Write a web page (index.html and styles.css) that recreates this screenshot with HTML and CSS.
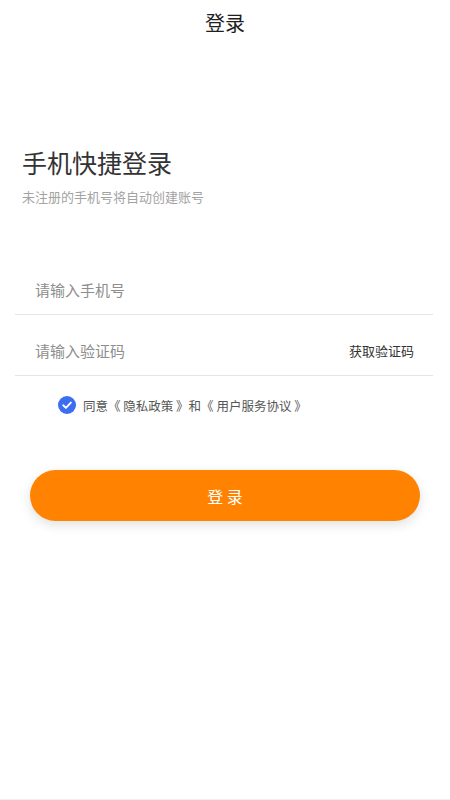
FILE: index.html
```html
<!DOCTYPE html>
<html lang="zh-CN">
<head>
<meta charset="utf-8">
<title>登录</title>
<link rel="stylesheet" href="styles.css">
</head>
<body>
<div class="page">
  <header class="topbar">登录</header>
  <section class="intro">
    <h1 class="heading">手机快捷登录</h1>
    <p class="sub">未注册的手机号将自动创建账号</p>
  </section>
  <form class="form">
    <div class="row">
      <span class="ph">请输入手机号</span>
    </div>
    <div class="row">
      <span class="ph">请输入验证码</span>
      <span class="code">获取验证码</span>
    </div>
  </form>
  <div class="agree">
    <span class="check">
      <svg width="18" height="18" viewBox="0 0 18 18"><circle cx="9" cy="9" r="9" fill="#3b6ef0"/><path d="M5.2 9.3 L7.9 11.9 L12.9 6.6" fill="none" stroke="#fff" stroke-width="1.9" stroke-linecap="round" stroke-linejoin="round"/></svg>
    </span>
    <span class="agree-text">同意《 隐私政策 》和《 用户服务协议 》</span>
  </div>
  <div class="btn-wrap">
    <button class="btn" type="button">登 录</button>
  </div>
</div>
</body>
</html>
```

FILE: styles.css
```css
* { box-sizing: border-box; }
html, body { margin: 0; padding: 0; background: #fff; }
body {
  font-family: "Noto Sans CJK SC", "Noto Sans", sans-serif;
  color: #333;
}
.page {
  height: 800px;
  border-bottom: 1px solid #f0f0f0;
  display: flex;
  flex-direction: column;
}
.topbar {
  height: 46px;
  line-height: 46px;
  text-align: center;
  font-size: 20px;
  color: #1f1f1f;
}
.intro {
  padding: 101px 0 0 22px;
}
.heading {
  margin: 0;
  font-size: 25px;
  font-weight: 400;
  line-height: 30px;
  color: #333;
}
.sub {
  margin: 10px 0 0;
  font-size: 13px;
  line-height: 20px;
  color: #a3a3a3;
}
.form {
  margin: 47px 17px 0 15px;
}
.row {
  margin-top: 11px;
  height: 50px;
  border-bottom: 1px solid #e6e6e6;
  display: flex;
  align-items: center;
  justify-content: space-between;
  padding: 0 19px 0 20px;
}
.ph {
  font-size: 15px;
  color: #8e8e8e;
}
.code {
  font-size: 13px;
  color: #333;
}
.agree {
  margin: 18px 0 0 58px;
  display: flex;
  align-items: center;
  gap: 7px;
  height: 22px;
}
.check { display: flex; width: 18px; height: 18px; }
.agree-text {
  font-size: 12.5px;
  color: #555;
}
.btn-wrap {
  padding: 0 30px;
  margin-top: 54px;
}
.btn {
  width: 100%;
  height: 51px;
  border: none;
  border-radius: 26px;
  background: #ff8300;
  color: #fff;
  font-family: inherit;
  font-size: 16px;
  box-shadow: 0 4px 12px rgba(0, 0, 0, 0.12);
}
```
